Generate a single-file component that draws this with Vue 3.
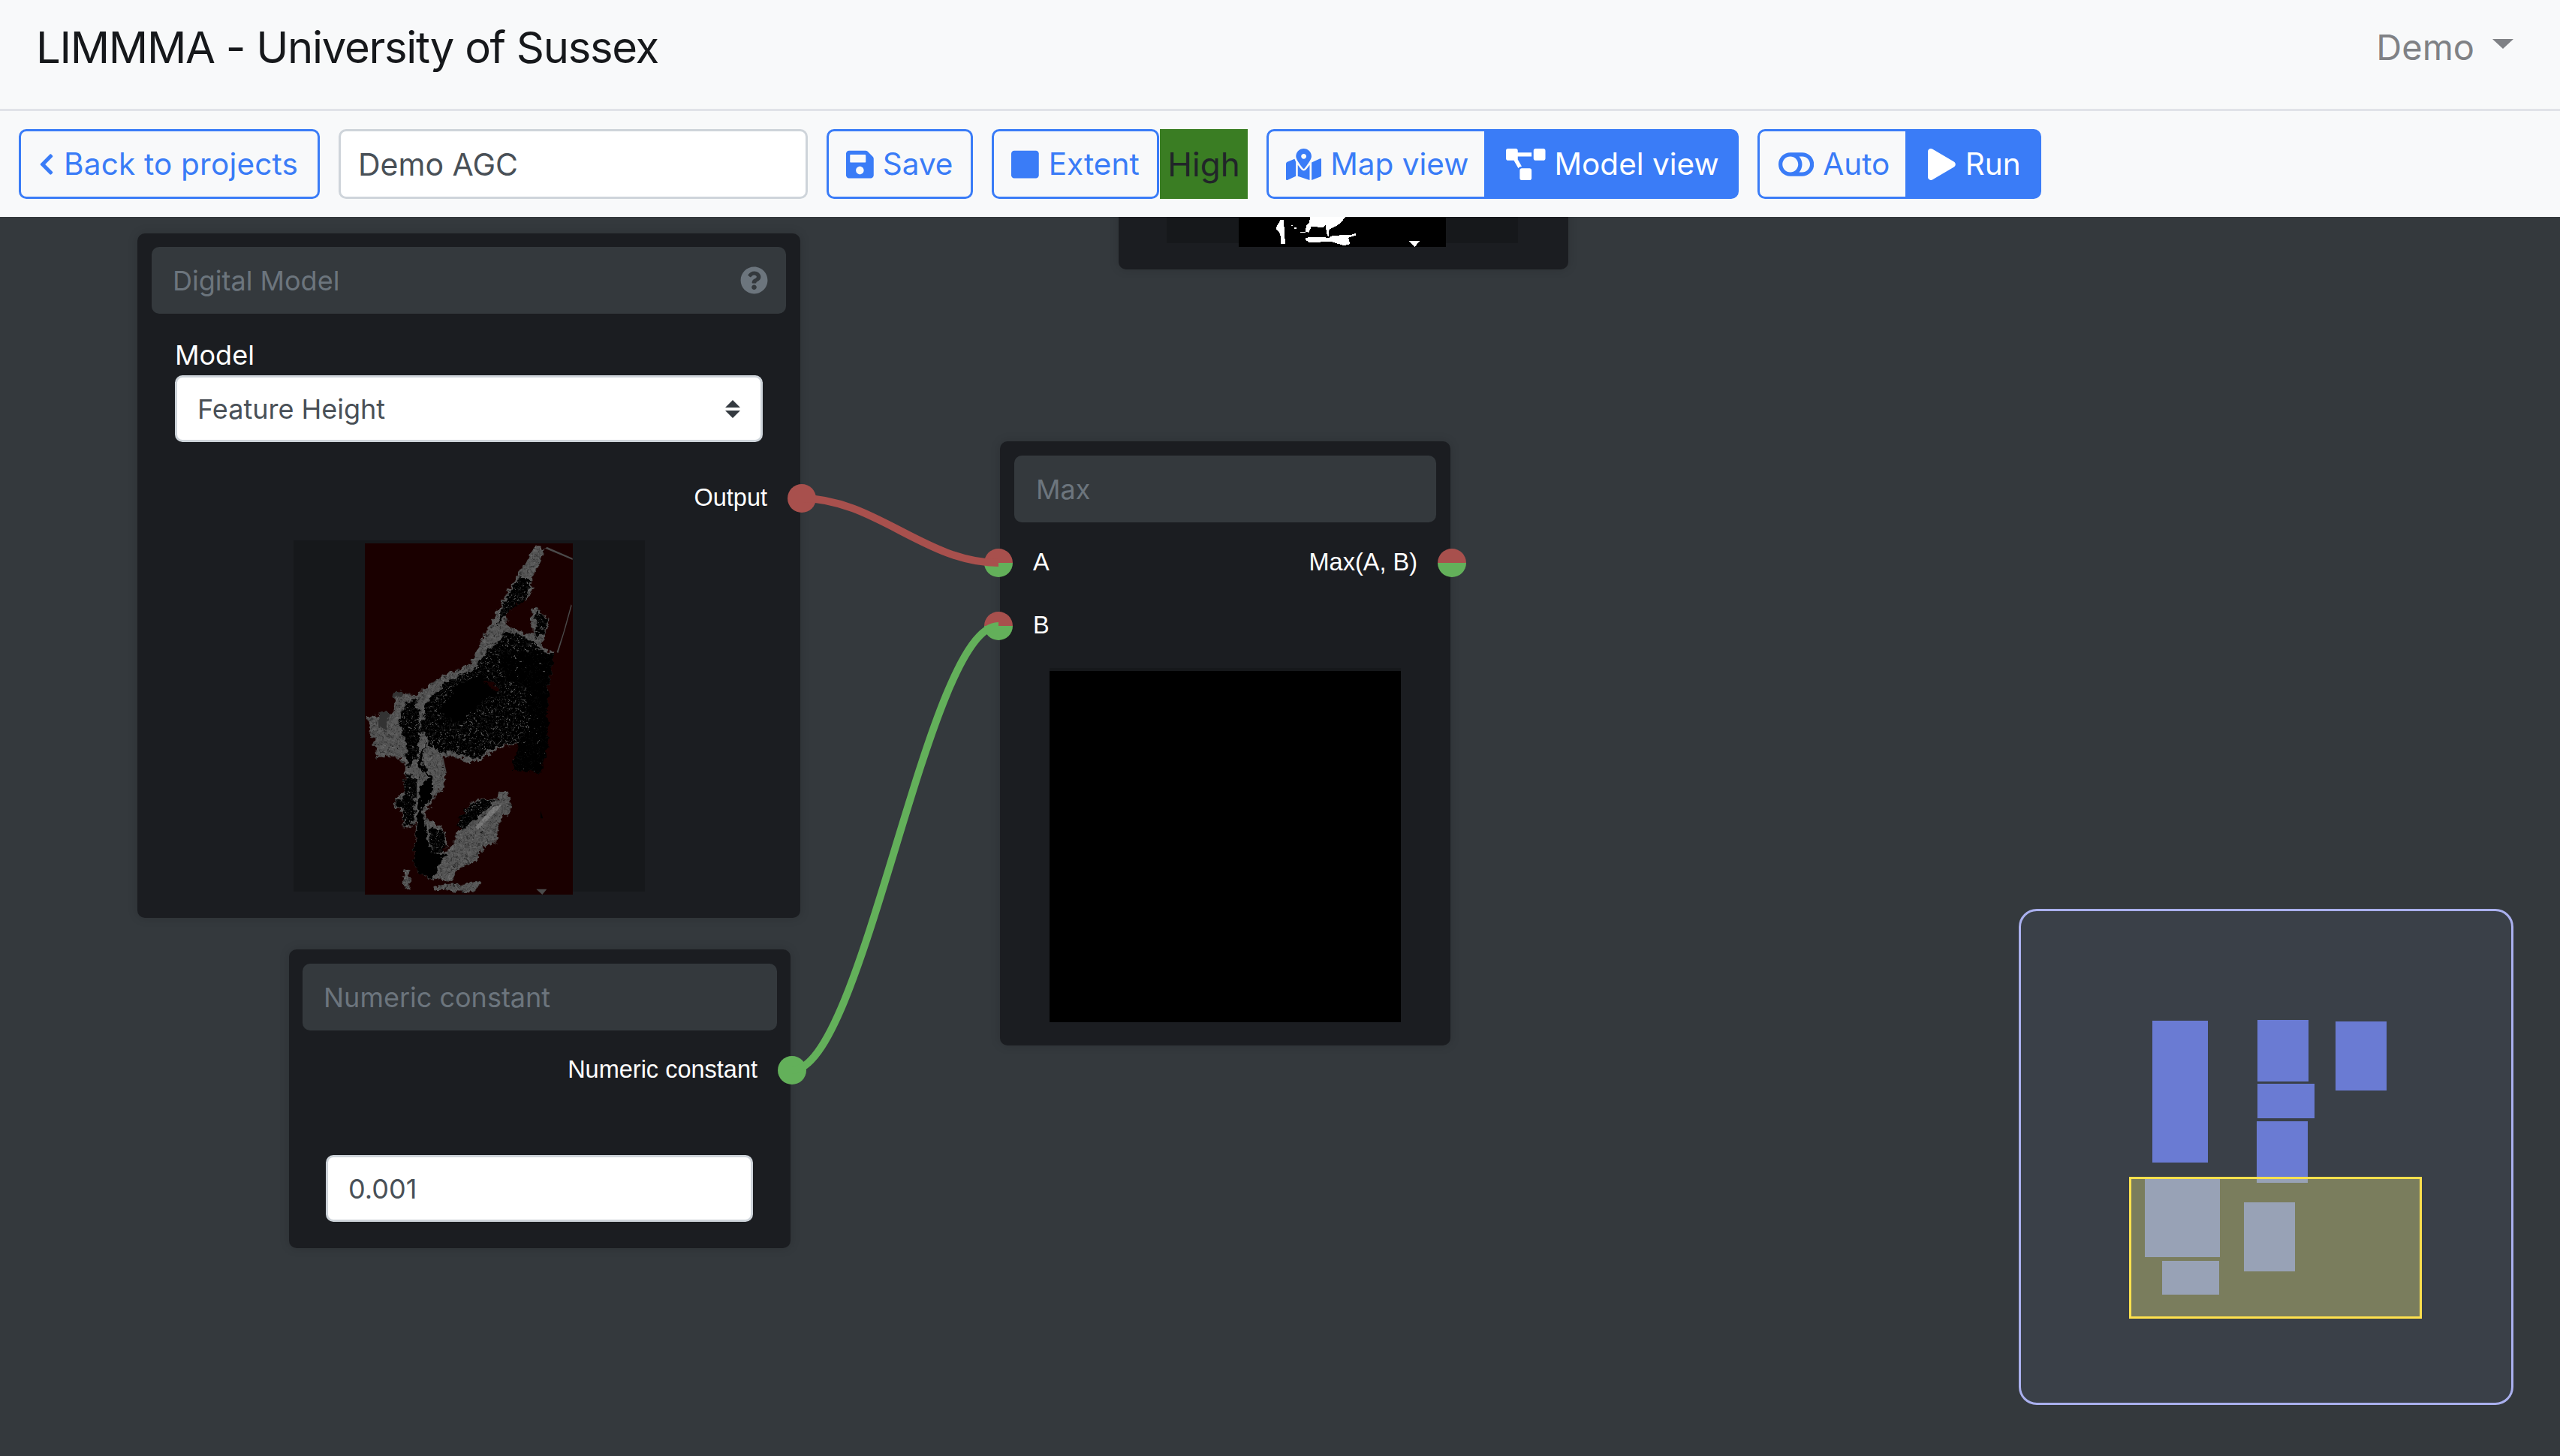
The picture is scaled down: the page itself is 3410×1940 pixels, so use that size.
<script setup>
// minimap rectangles, measured in px inside the minimap box
const miniNodes = [
  { x: 178, y: 149, w: 74, h: 189 },
  { x: 318, y: 148, w: 68, h: 82 },
  { x: 422, y: 150, w: 68, h: 92 },
  { x: 318, y: 233, w: 76, h: 46 },
  { x: 317, y: 283, w: 68, h: 82 },
  { x: 168, y: 358, w: 100, h: 106 },
  { x: 300, y: 391, w: 68, h: 92 },
  { x: 191, y: 469, w: 76, h: 45 },
]

const rectStyle = (r) => ({
  left: r.x + 'px',
  top: r.y + 'px',
  width: r.w + 'px',
  height: r.h + 'px',
})

const wires = [
  { d: 'M1068 375 C1165 375 1233 461 1330 461', color: '#a8504d' },
  { d: 'M1055 1137 C1150 1137 1235 545 1330 545', color: '#63b05a' },
]
</script>

<template>
  <div class="page">
    <header class="navbar">
      <div class="brand">LIMMMA - University of Sussex</div>
      <div class="user">Demo<span class="caret"></span></div>
    </header>

    <div class="toolbar">
      <button class="btn back">
        <svg class="ico chevron" viewBox="0 0 320 512"><path d="M34.52 239.03L228.87 44.69c9.37-9.37 24.57-9.37 33.94 0l22.67 22.67c9.36 9.36 9.37 24.52.04 33.9L131.49 256l154.02 154.75c9.34 9.38 9.32 24.54-.04 33.9l-22.67 22.67c-9.37 9.37-24.57 9.37-33.94 0L34.52 272.97c-9.37-9.37-9.37-24.57 0-33.94z"/></svg>
        Back to projects
      </button>
      <input class="name-input" value="Demo AGC" />
      <button class="btn save">
        <svg class="ico" viewBox="0 0 448 512"><path d="M433.941 129.941l-83.882-83.882A48 48 0 0 0 316.118 32H48C21.49 32 0 53.49 0 80v352c0 26.51 21.49 48 48 48h352c26.51 0 48-21.49 48-48V163.882a48 48 0 0 0-14.059-33.941zM224 416c-35.346 0-64-28.654-64-64 0-35.346 28.654-64 64-64s64 28.654 64 64c0 35.346-28.654 64-64 64zm96-304.52V212c0 6.627-5.373 12-12 12H76c-6.627 0-12-5.373-12-12V108c0-6.627 5.373-12 12-12h228.52c3.183 0 6.235 1.264 8.485 3.515l3.48 3.48A11.996 11.996 0 0 1 320 111.48z"/></svg>
        Save
      </button>
      <div class="group extent-group">
        <button class="btn extent">
          <svg class="ico" viewBox="0 0 448 512"><path d="M400 32H48C21.5 32 0 53.5 0 80v352c0 26.5 21.5 48 48 48h352c26.5 0 48-21.5 48-48V80c0-26.5-21.5-48-48-48z"/></svg>
          Extent
        </button>
        <div class="quality">High</div>
      </div>
      <div class="group">
        <button class="btn left map">
          <svg class="ico map-ico" viewBox="0 0 576 512"><path d="M288 0c-69.59 0-126 56.41-126 126 0 56.26 82.35 158.8 113.9 196.02 6.39 7.54 17.82 7.54 24.2 0C331.65 284.8 414 182.26 414 126 414 56.41 357.59 0 288 0zm0 168c-23.2 0-42-18.8-42-42s18.8-42 42-42 42 18.8 42 42-18.8 42-42 42zM20.12 215.95A32.006 32.006 0 0 0 0 245.66v250.32c0 11.32 11.43 19.06 21.94 14.86L160 448V214.92c-8.84-15.98-16.07-31.54-21.25-46.42L20.12 215.95zM288 359.67c-14.07 0-27.38-6.18-36.51-16.96-19.66-23.2-40.57-49.62-59.49-76.72V448l192 64V266c-18.92 27.09-39.82 53.52-59.49 76.72-9.13 10.77-22.44 16.95-36.51 16.95zm266.06-198.51L416 224v288l139.88-55.95A31.996 31.996 0 0 0 576 426.34V176.02c0-11.32-11.43-19.06-21.94-14.86z"/></svg>
          Map view
        </button>
        <button class="btn right active model">
          <svg class="ico diagram-ico" viewBox="0 0 640 512"><path d="M384 320H256c-17.67 0-32 14.33-32 32v128c0 17.67 14.33 32 32 32h128c17.67 0 32-14.33 32-32V352c0-17.67-14.33-32-32-32zM192 32c0-17.67-14.33-32-32-32H32C14.33 0 0 14.33 0 32v128c0 17.67 14.33 32 32 32h95.72l73.16 128.04C211.98 300.98 232.4 288 256 288h.28L192 175.51V128h224V64H192V32zM608 0H480c-17.67 0-32 14.33-32 32v128c0 17.67 14.33 32 32 32h128c17.67 0 32-14.33 32-32V32c0-17.67-14.33-32-32-32z"/></svg>
          Model view
        </button>
      </div>
      <div class="group">
        <button class="btn left auto">
          <svg class="ico toggle-ico" viewBox="0 0 576 512"><path d="M384 64H192C86 64 0 150 0 256s86 192 192 192h192c106 0 192-86 192-192S490 64 384 64zM64 256c0-70.7 57.3-128 128-128s128 57.3 128 128-57.3 128-128 128S64 326.7 64 256zm320 128h-48.9c65.2-72.6 65.2-183.4 0-256H384c70.7 0 128 57.3 128 128s-57.2 128-128 128z"/></svg>
          Auto
        </button>
        <button class="btn right active run">
          <svg class="ico play-ico" viewBox="0 0 448 512"><path d="M424.4 214.7L72.4 6.6C43.8-10.3 0 6.1 0 47.9V464c0 37.5 40.7 60.1 72.4 41.3l352-208c31.4-18.5 31.5-64.1 0-82.6z"/></svg>
          Run
        </button>
      </div>
    </div>

    <main class="canvas">
      <!-- node cut off by the toolbar -->
      <section class="node node-top">
        <div class="frame frame-top">
          <svg class="top-image" viewBox="430 57 698 120" preserveAspectRatio="none" shape-rendering="crispEdges">
            <rect x="430" y="57" width="698" height="120" fill="#000" />
            <path fill="#fff" d="M556 100L570 70H582L584 120L587 165H572L570 125L556 105Z" />
            <path fill="#fff" d="M670 57H790L770 85L735 108L733 135L728 130L722 90L715 100L675 95L665 120L655 115L658 90L668 80Z" />
            <path fill="#fff" d="M655 140L690 138L735 140L745 132L810 128L825 122L825 130L800 140L805 165L785 172L740 155L670 160L655 150Z" />
            <path fill="#fff" d="M1003 153H1040L1023 177Z" />
            <path fill="#fff" d="M606 90H613V93H606ZM618 98H625V104H618ZM637 117H655V120H637Z" />
          </svg>
        </div>
      </section>

      <!-- Digital Model -->
      <section class="node node-digital">
        <div class="node-title">
          <span>Digital Model</span>
          <svg class="help" viewBox="0 0 512 512"><path d="M504 256c0 136.997-111.043 248-248 248S8 392.997 8 256C8 119.083 119.043 8 256 8s248 111.083 248 248zM262.655 90c-54.497 0-89.255 22.957-116.549 63.758-3.536 5.286-2.353 12.415 2.715 16.258l34.699 26.31c5.205 3.947 12.621 3.008 16.665-2.122 17.864-22.658 30.113-35.797 57.303-35.797 20.429 0 45.698 13.148 45.698 32.958 0 14.976-12.363 22.667-32.534 33.976C247.128 238.528 216 254.941 216 296v4c0 6.627 5.373 12 12 12h56c6.627 0 12-5.373 12-12v-1.333c0-28.462 83.186-29.647 83.186-106.667 0-58.002-60.165-102-116.531-102zM256 338c-25.365 0-46 20.635-46 46 0 25.364 20.635 46 46 46s46-20.636 46-46c0-25.365-20.635-46-46-46z"/></svg>
        </div>
        <label class="field-label">Model</label>
        <div class="select-wrap">
          <select class="model-select"><option>Feature Height</option></select>
          <svg class="select-arrow" viewBox="0 0 20 24"><path d="M10 0L20 10H0ZM10 24L0 14H20Z" /></svg>
        </div>
        <div class="socket-row out-row digital-output">
          <span class="socket-label">Output</span>
          <span class="socket red"></span>
        </div>
        <div class="frame frame-digital">
          <svg class="digital-image" viewBox="78 71 831 1404" preserveAspectRatio="none">
            <defs>
              <filter id="rough" x="0" y="0" width="1" height="1" color-interpolation-filters="sRGB">
                <feTurbulence type="fractalNoise" baseFrequency="0.045" numOctaves="3" seed="5" />
                <feDisplacementMap in="SourceGraphic" scale="34" xChannelSelector="R" yChannelSelector="G" />
              </filter>
              <filter id="speckle" x="0" y="0" width="1" height="1" color-interpolation-filters="sRGB">
                <feTurbulence type="fractalNoise" baseFrequency="0.13" numOctaves="2" seed="7" />
                <feColorMatrix type="matrix" values="1 0 0 0 0 1 0 0 0 0 1 0 0 0 0 0 0 0 0 1" />
                <feComponentTransfer>
                  <feFuncR type="discrete" tableValues="0 0 0 0 0 0.06 0.26 0.38 0.65" />
                  <feFuncG type="discrete" tableValues="0 0 0 0 0 0.06 0.26 0.38 0.65" />
                  <feFuncB type="discrete" tableValues="0 0 0 0 0 0.06 0.26 0.38 0.65" />
                </feComponentTransfer>
                <feComposite in2="SourceAlpha" operator="in" />
              </filter>
              <filter id="soft" x="0" y="0" width="1" height="1" color-interpolation-filters="sRGB">
                <feTurbulence type="fractalNoise" baseFrequency="0.1" numOctaves="2" seed="3" />
                <feColorMatrix type="matrix" values="1 0 0 0 0 1 0 0 0 0 1 0 0 0 0 0 0 0 0 1" />
                <feComponentTransfer>
                  <feFuncR type="discrete" tableValues="0 0.08 0.22 0.29 0.33 0.35 0.38 0.42 0.52" />
                  <feFuncG type="discrete" tableValues="0 0.08 0.22 0.29 0.33 0.35 0.38 0.42 0.52" />
                  <feFuncB type="discrete" tableValues="0 0.08 0.22 0.29 0.33 0.35 0.38 0.42 0.52" />
                </feComponentTransfer>
                <feComposite in2="SourceAlpha" operator="in" />
              </filter>
              <filter id="sparse" x="0" y="0" width="1" height="1" color-interpolation-filters="sRGB">
                <feTurbulence type="fractalNoise" baseFrequency="0.18" numOctaves="2" seed="11" />
                <feColorMatrix type="matrix" values="1 0 0 0 0 1 0 0 0 0 1 0 0 0 0 0 0 0 0 1" />
                <feComponentTransfer>
                  <feFuncR type="discrete" tableValues="0 0 0 0 0 0 0.03 0.3 0.6" />
                  <feFuncG type="discrete" tableValues="0 0 0 0 0 0 0.03 0.3 0.6" />
                  <feFuncB type="discrete" tableValues="0 0 0 0 0 0 0.03 0.3 0.6" />
                </feComponentTransfer>
                <feComposite in2="SourceAlpha" operator="in" />
              </filter>
            </defs>
            <rect x="78" y="71" width="831" height="1404" fill="#1a0000" />
            <g filter="url(#rough)">
              <!-- whole land mass, soft gray -->
              <path filter="url(#soft)" fill="#666" d="M760 78L800 90L785 130L745 210L748 250L720 295L690 290L640 350L650 400L750 440L745 340L760 325L815 375L795 440L790 490L835 505L812 640L802 800L810 880L690 870L600 895L520 950L420 920L385 930L400 990L390 1050L340 1110L320 1170L390 1205L405 1260L395 1310L430 1270L490 1130L520 1095L610 1090L612 1060L650 1060L660 1140L610 1190L605 1265L550 1285L530 1330L440 1385L430 1420L345 1415L285 1380L275 1320L280 1180L255 1210L230 1205L225 1130L195 1130L195 1090L232 1070L240 970L220 925L125 925L105 830L85 765L190 745L198 665L285 680L310 655L400 595L500 555L570 410L640 280L680 210Z" />
              <path fill="#333" d="M135 755L182 748L160 808L130 805ZM195 665H235L230 685H195Z" />
              <!-- speckled body: mostly black with gray points -->
              <path filter="url(#speckle)" fill="#666" d="M325 710L400 625L500 585L580 490L650 420L745 455L785 500L808 640L798 800L805 870L690 865L600 885L520 935L420 905L385 915L335 870L300 820ZM240 700L285 700L300 820L290 930L245 970L245 870L210 790ZM240 990L285 1010L270 1195L232 1200L230 1110ZM200 1095L240 1090V1125H200Z" />
              <path filter="url(#speckle)" fill="#666" d="M690 215L745 215L720 290L650 345L610 395L630 310ZM760 335L810 375L790 435L760 440ZM480 1140L520 1100L600 1095L565 1130L470 1215L445 1195ZM330 1205L390 1215L400 1300L350 1315Z" />
              <!-- mostly black east part -->
              <path filter="url(#sparse)" fill="#000" d="M610 520L690 500L835 510L812 640L805 800L812 880L778 985L668 980L690 880L735 790L720 650L640 610Z" />
              <!-- lake and river -->
              <path fill="#000" d="M378 740L440 645L540 595L575 640L605 662L550 700L500 745L470 785L430 782Z" />
              <path fill="#1a0000" d="M548 622L590 628L618 660L600 660Z" />
              <path fill="#000" d="M300 910L288 950L330 1010L302 1040L285 1180L275 1320L285 1380L345 1412L380 1345L405 1312L350 1312L325 1250L315 1170L305 1140L345 1085L345 1010L298 935L335 860Z" />
              <!-- small islands -->
              <path fill="#666" filter="url(#soft)" d="M237 1375L256 1370L260 1458L246 1458L232 1400ZM352 1442L440 1437L538 1422L542 1430L520 1448L522 1462L490 1468L400 1454L356 1454Z" />
            </g>
            <!-- thin lines at the edge -->
            <path fill="#4a4a4a" d="M763 1453H805L787 1475ZM805 85L908 130V137L800 92ZM902 315L905 320L880 410L850 510L845 505L870 430ZM385 930L392 930L405 990L398 990Z" />
            <path fill="#999" opacity="0.5" d="M590 1125L625 1115L610 1135L530 1215L520 1205Z" />
            <path fill="#000" d="M780 1140L790 1170H780Z" />
          </svg>
        </div>
      </section>

      <!-- Numeric constant -->
      <section class="node node-numeric">
        <div class="node-title"><span>Numeric constant</span></div>
        <div class="socket-row out-row numeric-output">
          <span class="socket-label">Numeric constant</span>
          <span class="socket green"></span>
        </div>
        <input class="number-input" value="0.001" />
      </section>

      <!-- Max -->
      <section class="node node-max">
        <div class="node-title"><span>Max</span></div>
        <div class="socket-row max-row">
          <span class="socket split"></span>
          <span class="socket-label">A</span>
          <span class="socket-label push">Max(A, B)</span>
          <span class="socket split"></span>
        </div>
        <div class="socket-row max-row second">
          <span class="socket split"></span>
          <span class="socket-label">B</span>
        </div>
        <div class="frame frame-max"><div class="black-image"></div></div>
      </section>

      <svg class="wires" width="3410" height="1651">
        <path v-for="w in wires" :key="w.d" :d="w.d" :stroke="w.color" />
      </svg>

      <div class="minimap">
        <div v-for="(r, i) in miniNodes" :key="i" class="mini-node" :style="rectStyle(r)"></div>
        <div class="mini-view"></div>
      </div>
    </main>
  </div>
</template>

<style>
html, body { margin: 0; background: #34393d; }
</style>

<style scoped>
.page {
  width: 3410px;
  height: 1940px;
  display: flex;
  flex-direction: column;
  overflow: hidden;
  font-family: Inter, "Liberation Sans", sans-serif;
}

.navbar {
  height: 148px;
  box-sizing: border-box;
  background: #f8f9fa;
  display: flex;
  align-items: center;
  justify-content: space-between;
  padding: 0 62px 20px 48px;
  border-bottom: 3px solid #e1e3e8;
}
.brand { font-size: 58px; color: #16181b; letter-spacing: -1.3px; }
.user { font-size: 47px; color: #7f8185; display: flex; align-items: center; }
.caret {
  margin-left: 24px;
  margin-top: -8px;
  border-left: 14px solid transparent;
  border-right: 14px solid transparent;
  border-top: 13px solid #7f8185;
}

.toolbar {
  height: 141px;
  box-sizing: border-box;
  background: #f8f9fa;
  display: flex;
  align-items: center;
  padding: 0 0 0 25px;
  gap: 25px;
  flex: none;
  z-index: 2;
  position: relative;
}

.btn {
  height: 93px;
  box-sizing: border-box;
  border: 3px solid #3a7cf7;
  border-radius: 10px;
  background: transparent;
  color: #3a7cf7;
  font-family: inherit;
  font-size: 40.5px;
  display: flex;
  align-items: center;
  padding: 0;
  white-space: nowrap;
}
.btn.active { background: #3a7cf7; color: #fff; }
.btn.left { border-radius: 10px 0 0 10px; }
.btn.right { border-radius: 0 10px 10px 0; }

.ico { height: 42px; fill: currentColor; flex: none; }

.back { width: 401px; padding-left: 24px; gap: 13px; letter-spacing: 0.2px; }
.chevron { height: 32px; }
.save { width: 195px; padding-left: 23px; gap: 12px; }
.group { display: flex; }
.extent-group { gap: 1px; }
.extent { width: 223px; border-radius: 10px; padding-left: 23px; gap: 13px; }
.quality {
  width: 117px;
  height: 93px;
  background: #3a7d23;
  color: #212529;
  font-size: 44px;
  display: flex;
  align-items: center;
  justify-content: center;
}
.map { width: 293px; padding-left: 23px; gap: 12px; }
.model { width: 336px; padding-left: 23px; gap: 12px; }
.auto { width: 200px; padding-left: 25px; gap: 12px; }
.run { width: 178px; padding-left: 24px; gap: 13px; }

.name-input {
  width: 625px;
  height: 93px;
  box-sizing: border-box;
  border: 3px solid #ced4da;
  border-radius: 10px;
  background: #fff;
  color: #495057;
  font-family: inherit;
  font-size: 41px;
  padding: 0 23px;
  outline: none;
}

.canvas {
  position: relative;
  flex: 1;
  background: #34393d;
}

.node {
  position: absolute;
  box-sizing: border-box;
  background: #1b1d21;
  border-radius: 10px;
  box-shadow: 0 0 14px rgba(0, 0, 0, 0.14);
}
.node-title {
  position: absolute;
  box-sizing: border-box;
  height: 89px;
  background: #34393d;
  border-radius: 10px;
  color: #6c757d;
  font-size: 36px;
  display: flex;
  align-items: center;
  justify-content: space-between;
}

.node-top { left: 1490px; top: -60px; width: 599px; height: 130px; }
.frame { position: absolute; background: #16181b; }
.frame-top { left: 64px; top: 0; width: 468px; height: 95px; }
.top-image { position: absolute; left: 96px; top: 60px; width: 276px; height: 40px; }

.node-digital { left: 183px; top: 22px; width: 883px; height: 912px; }
.node-digital .node-title { left: 19px; top: 18px; width: 845px; padding: 0 24px 0 28px; }
.help { width: 37px; height: 37px; fill: #6c757d; }
.field-label {
  position: absolute;
  left: 50px;
  top: 140px;
  color: #fff;
  font-size: 36px;
}
.select-wrap {
  position: absolute;
  left: 50px;
  top: 189px;
  width: 783px;
  height: 89px;
}
.model-select {
  width: 100%;
  height: 100%;
  box-sizing: border-box;
  appearance: none;
  border: 3px solid #ced4da;
  border-radius: 10px;
  background: #fff;
  color: #495057;
  font-family: inherit;
  font-size: 36px;
  padding: 0 27px;
  outline: none;
}
.select-arrow {
  position: absolute;
  right: 30px;
  top: 33px;
  width: 20px;
  height: 24px;
  fill: #343a40;
}

.socket-row { position: absolute; display: flex; align-items: center; }
.out-row { justify-content: flex-end; gap: 27px; }
.socket-label {
  color: #fff;
  font-family: "Liberation Sans", Arial, sans-serif;
  font-size: 32.5px;
  position: relative;
  top: -1px;
}
.push { margin-left: auto; }
.socket {
  width: 38px;
  height: 38px;
  border-radius: 50%;
  flex: none;
}
.red { background: #a8504d; }
.green { background: #63b05a; }
.split { background: linear-gradient(#a8504d 50%, #63b05a 50%); }

.digital-output { right: -21px; top: 334px; }
.frame-digital { left: 208px; top: 409px; width: 468px; height: 468px; }
.digital-image { position: absolute; left: 95px; top: 4px; width: 277px; height: 468px; }

.node-numeric { left: 385px; top: 976px; width: 668px; height: 398px; }
.node-numeric .node-title { left: 18px; top: 19px; width: 632px; padding: 0 28px; }
.numeric-output { right: -21px; top: 142px; }
.number-input {
  position: absolute;
  left: 49px;
  top: 274px;
  width: 569px;
  height: 89px;
  box-sizing: border-box;
  border: 3px solid #ced4da;
  border-radius: 10px;
  background: #fff;
  color: #495057;
  font-family: inherit;
  font-size: 36px;
  padding: 0 27px;
  outline: none;
}

.node-max { left: 1332px; top: 299px; width: 600px; height: 805px; }
.node-max .node-title { left: 19px; top: 19px; width: 562px; padding: 0 29px; }
.max-row { left: -21px; right: -21px; top: 143px; gap: 27px; }
.max-row.second { top: 227px; }
.frame-max { left: 66px; top: 302px; width: 468px; height: 470px; }
.black-image { position: absolute; left: 0; top: 4px; width: 468px; height: 468px; background: #000; }

.wires { position: absolute; left: 0; top: 0; pointer-events: none; }
.wires path { fill: none; stroke-width: 10px; }

.minimap {
  position: absolute;
  left: 2689px;
  top: 922px;
  width: 659px;
  height: 661px;
  box-sizing: border-box;
  border: 3px solid #aab0ee;
  border-radius: 24px;
  background: #3a4048;
}
.mini-node { position: absolute; background: #6a7bd3; margin: -3px 0 0 -3px; }
.mini-view {
  position: absolute;
  left: 144px;
  top: 354px;
  width: 390px;
  height: 189px;
  box-sizing: border-box;
  border: 3px solid #ffe14d;
  background: rgba(236, 233, 130, 0.36);
}
</style>
